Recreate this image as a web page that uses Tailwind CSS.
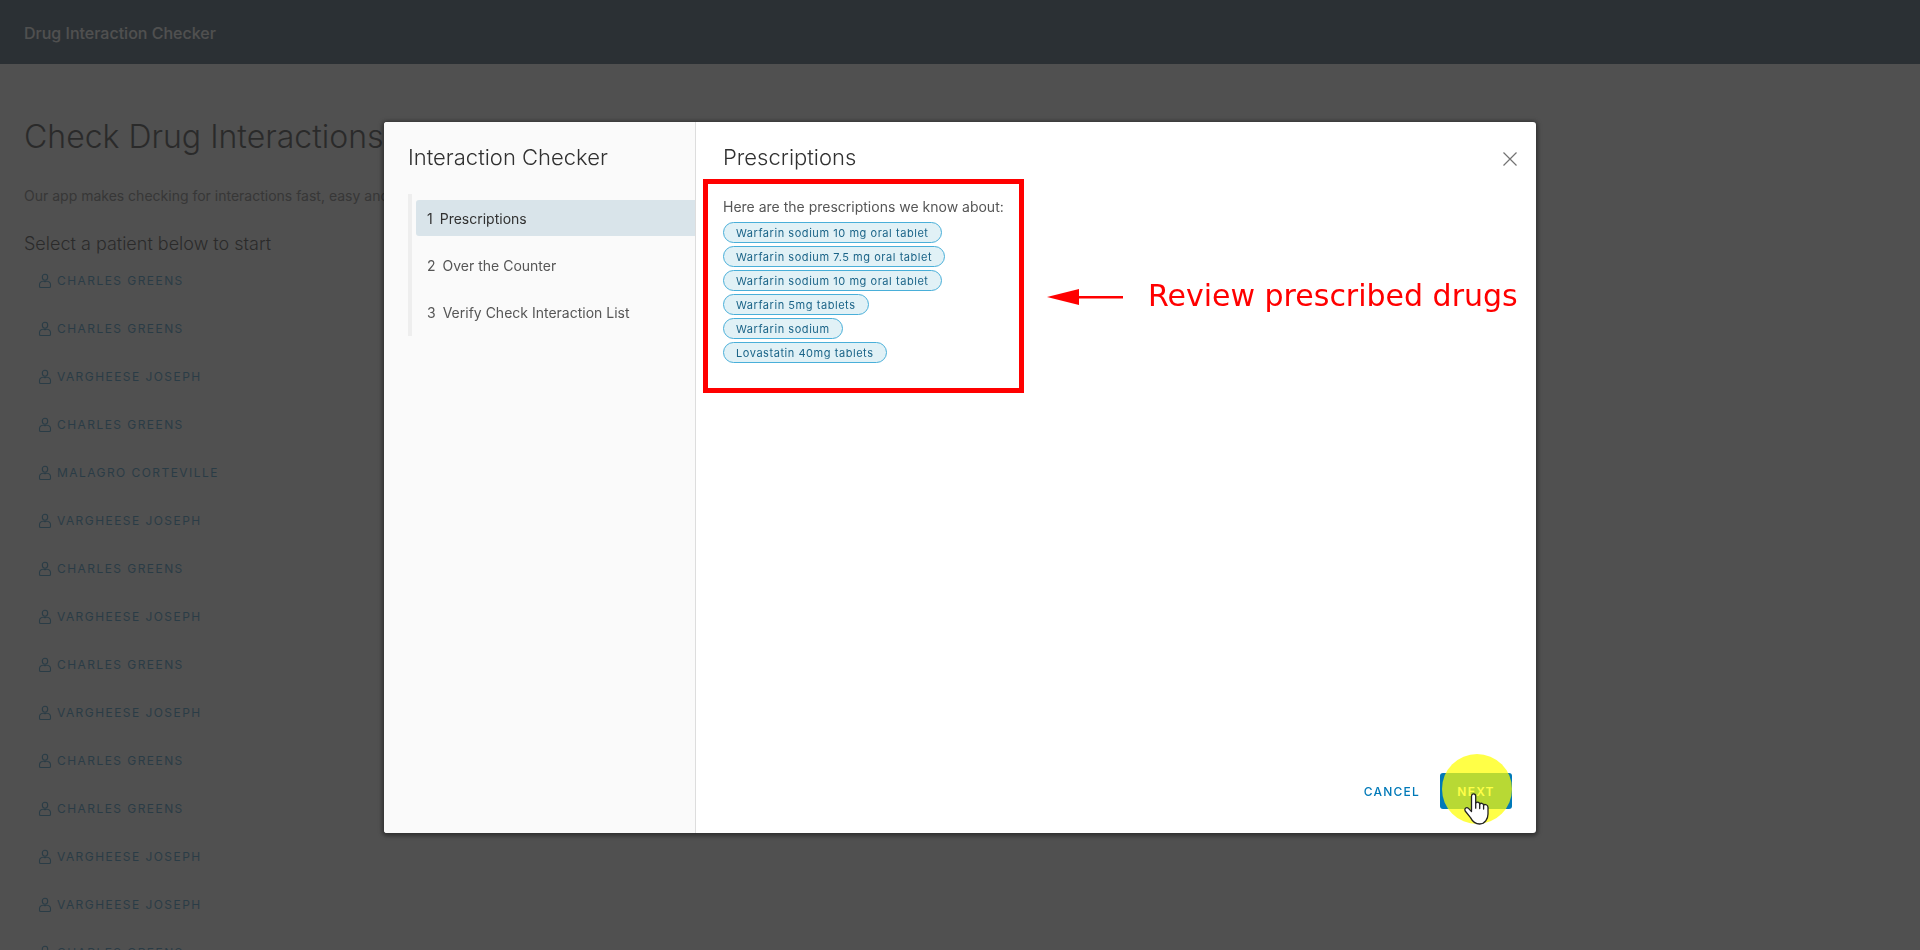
<!DOCTYPE html>
<html lang="en">
<head>
<meta charset="utf-8">
<meta name="viewport" content="width=device-width, initial-scale=1">
<title>Drug Interaction Checker</title>
<script src="https://cdn.jsdelivr.net/npm/@tailwindcss/browser@4"></script>
</head>
<body class="h-screen overflow-hidden bg-[#fafafa] font-['Inter',sans-serif] text-sm text-[#565656]">

<svg class="hidden" aria-hidden="true">
  <symbol id="user" viewBox="0 0 16 16" fill="none" stroke="currentColor" stroke-width="1.1">
    <path d="M8 1.200c1.600 0 2.700 1.200 2.700 2.900S9.600 7.300 8 7.300 5.300 5.800 5.300 4.100 6.400 1.200 8 1.200z"/>
    <path d="M5.900 8.300C4 8.600 2.500 10 2.500 11.800v1.400c0 .7.500 1.300 1.200 1.300h8.600c.7 0 1.200-.6 1.200-1.300v-1.400c0-1.800-1.500-3.200-3.400-3.500"/>
    <path d="M6.200 8.100c1.100.7 2.500.7 3.600 0"/>
  </symbol>
</svg>

<div class="flex h-full flex-col">
  <header class="flex h-16 shrink-0 items-center bg-[#0c2d44] px-6 pt-0.5">
    <a href="#" class="text-base leading-6 font-medium text-[#fafafa]">Drug Interaction Checker</a>
  </header>
  <main class="min-h-0 flex-1 overflow-hidden px-6 pt-[49px]">
    <h1 class="text-[32px] leading-12 font-light text-black">Check Drug Interactions</h1>
    <p class="mt-[23px] leading-6">Our app makes checking for interactions fast, easy and accurate.</p>
    <h2 class="mt-6 mb-px text-lg leading-6 font-light text-black">Select a patient below to start</h2>
    <ul id="patients" class="flex flex-col items-start"></ul>
  </main>
</div>
<template id="patient">
  <li class="flex h-12 items-center">
    <button type="button" class="flex h-9 items-center gap-1 px-[13px] text-xs tracking-[0.12em] text-[#0079b8] uppercase">
      <svg class="size-4 shrink-0" aria-hidden="true"><use href="#user"/></svg><span></span>
    </button>
  </li>
</template>

<div class="fixed inset-0 bg-[#313131]/85"></div>

<div class="fixed inset-0 flex justify-center pt-[122px] pb-[117px]">
  <div role="dialog" aria-modal="true" aria-labelledby="wizard-title" class="relative flex w-3/5 rounded-[3px] bg-white shadow-[0_1px_4px_2px_rgba(0,0,0,0.4)]">
    <nav class="w-[312px] shrink-0 rounded-l-[3px] border-r border-[#dddddd] bg-[#fafafa] pt-[23px] pl-6">
      <h2 id="wizard-title" class="text-[22px] leading-6 font-light text-[#313131]">Interaction Checker</h2>
      <ol class="mt-[25px] flex flex-col gap-[11px] border-l-4 border-[#eeeeee] py-1.5 pl-1">
        <li><button type="button" aria-current="step" class="flex h-9 w-full items-center gap-[7px] rounded-l-[3px] bg-[#d9e4ea] pt-0.5 pl-[11px] text-[#313131]"><span>1</span>Prescriptions</button></li>
        <li><button type="button" class="flex h-9 w-full items-center gap-[7px] pt-0.5 pl-[11px]"><span>2</span>Over the Counter</button></li>
        <li><button type="button" class="flex h-9 w-full items-center gap-[7px] pt-0.5 pl-[11px]"><span>3</span>Verify Check Interaction List</button></li>
      </ol>
    </nav>

    <section class="flex min-w-0 flex-1 flex-col pt-[23px] pr-6 pb-6 pl-[27px]">
      <div class="flex items-start justify-between">
        <h3 class="text-[22px] leading-6 font-light text-[#313131]">Prescriptions</h3>
        <button type="button" aria-label="Close" class="-mr-2.5 mt-0.5 flex size-6 items-center justify-center text-[#737373]">
          <svg class="size-4" viewBox="0 0 16 16" fill="none" stroke="currentColor" stroke-width="1.2" aria-hidden="true"><path d="M1.500 1.500l13 13M14.500 1.500l-13 13"/></svg>
        </button>
      </div>
      <div class="flex-1">
        <div class="relative mt-6">
          <p class="leading-6">Here are the prescriptions we know about:</p>
          <ul id="drugs" class="mt-[3px] flex flex-col items-start gap-[3px]"></ul>
          <div class="absolute -top-4 -left-5 h-[214px] w-[321px] border-5 border-[#ff0000]"></div>
          <div class="absolute top-[83px] left-[324px] flex items-center gap-[25px] whitespace-nowrap text-[#ff0000]">
            <svg class="mt-0.5 h-4 w-[76px] shrink-0" viewBox="0 0 76 16" fill="currentColor" aria-hidden="true"><path d="M0 8L32 0v7h44v2.500H32V16z"/></svg>
            <span class="font-['DejaVu_Sans',Verdana,sans-serif] text-[30px] leading-9">Review prescribed drugs</span>
          </div>
        </div>
      </div>
      <div class="flex items-center justify-end gap-2">
        <button type="button" class="h-9 px-3 pt-0.5 text-xs font-medium tracking-widest text-[#0079b8] uppercase">Cancel</button>
        <div class="relative">
          <button type="button" class="h-9 w-18 rounded-[3px] bg-[#0079b8] pt-0.5 text-xs font-semibold tracking-widest text-white uppercase">Next</button>
          <div class="pointer-events-none absolute -top-[19px] left-0.5 size-[70px] rounded-full bg-[#ffff00]/72"></div>
          <svg class="pointer-events-none absolute top-[20px] left-6 h-8 w-[26px]" viewBox="0 0 26 32" fill="#fff" stroke="#222" stroke-width="1.300" stroke-linejoin="round" stroke-linecap="round" aria-hidden="true">
            <path d="M7.500 18.500V3.200c0-3 4.200-3 4.200 0v7c.8-1.500 3.800-1.300 4 .8.9-1.200 3.600-.9 3.900 1 1.200-1 4.400-.5 4.400 2.500v6.500c0 4.500-2.800 10-8.300 10-5 0-7.200-2.500-9.200-6.400L1.200 18c-1.200-2.700 1.500-4.300 3.300-2.600z"/>
            <path d="M11.700 10.200v5M15.700 11v4.500M19.600 12v4" fill="none"/>
          </svg>
        </div>
      </div>
    </section>
  </div>
</div>
<template id="drug">
  <li class="flex h-[21px] items-center rounded-full border border-[#49afd9] bg-[#e1f1f6] px-3 text-[11px] leading-4 tracking-wider text-[#1b6488]"></li>
</template>

<script>
const fill = (list, template, items, pick) => items.forEach(name => {
  const node = document.getElementById(template).content.cloneNode(true);
  node.querySelector(pick).textContent = name;
  document.getElementById(list).append(node);
});
const C = "Charles Greens", V = "Vargheese Joseph";
fill("patients", "patient", [C, C, V, C, "Malagro Corteville", V, C, V, C, V, C, C, V, V, C], "span");
fill("drugs", "drug", [
  "Warfarin sodium 10 mg oral tablet",
  "Warfarin sodium 7.5 mg oral tablet",
  "Warfarin sodium 10 mg oral tablet",
  "Warfarin 5mg tablets",
  "Warfarin sodium",
  "Lovastatin 40mg tablets"
], "li");
</script>
</body>
</html>
